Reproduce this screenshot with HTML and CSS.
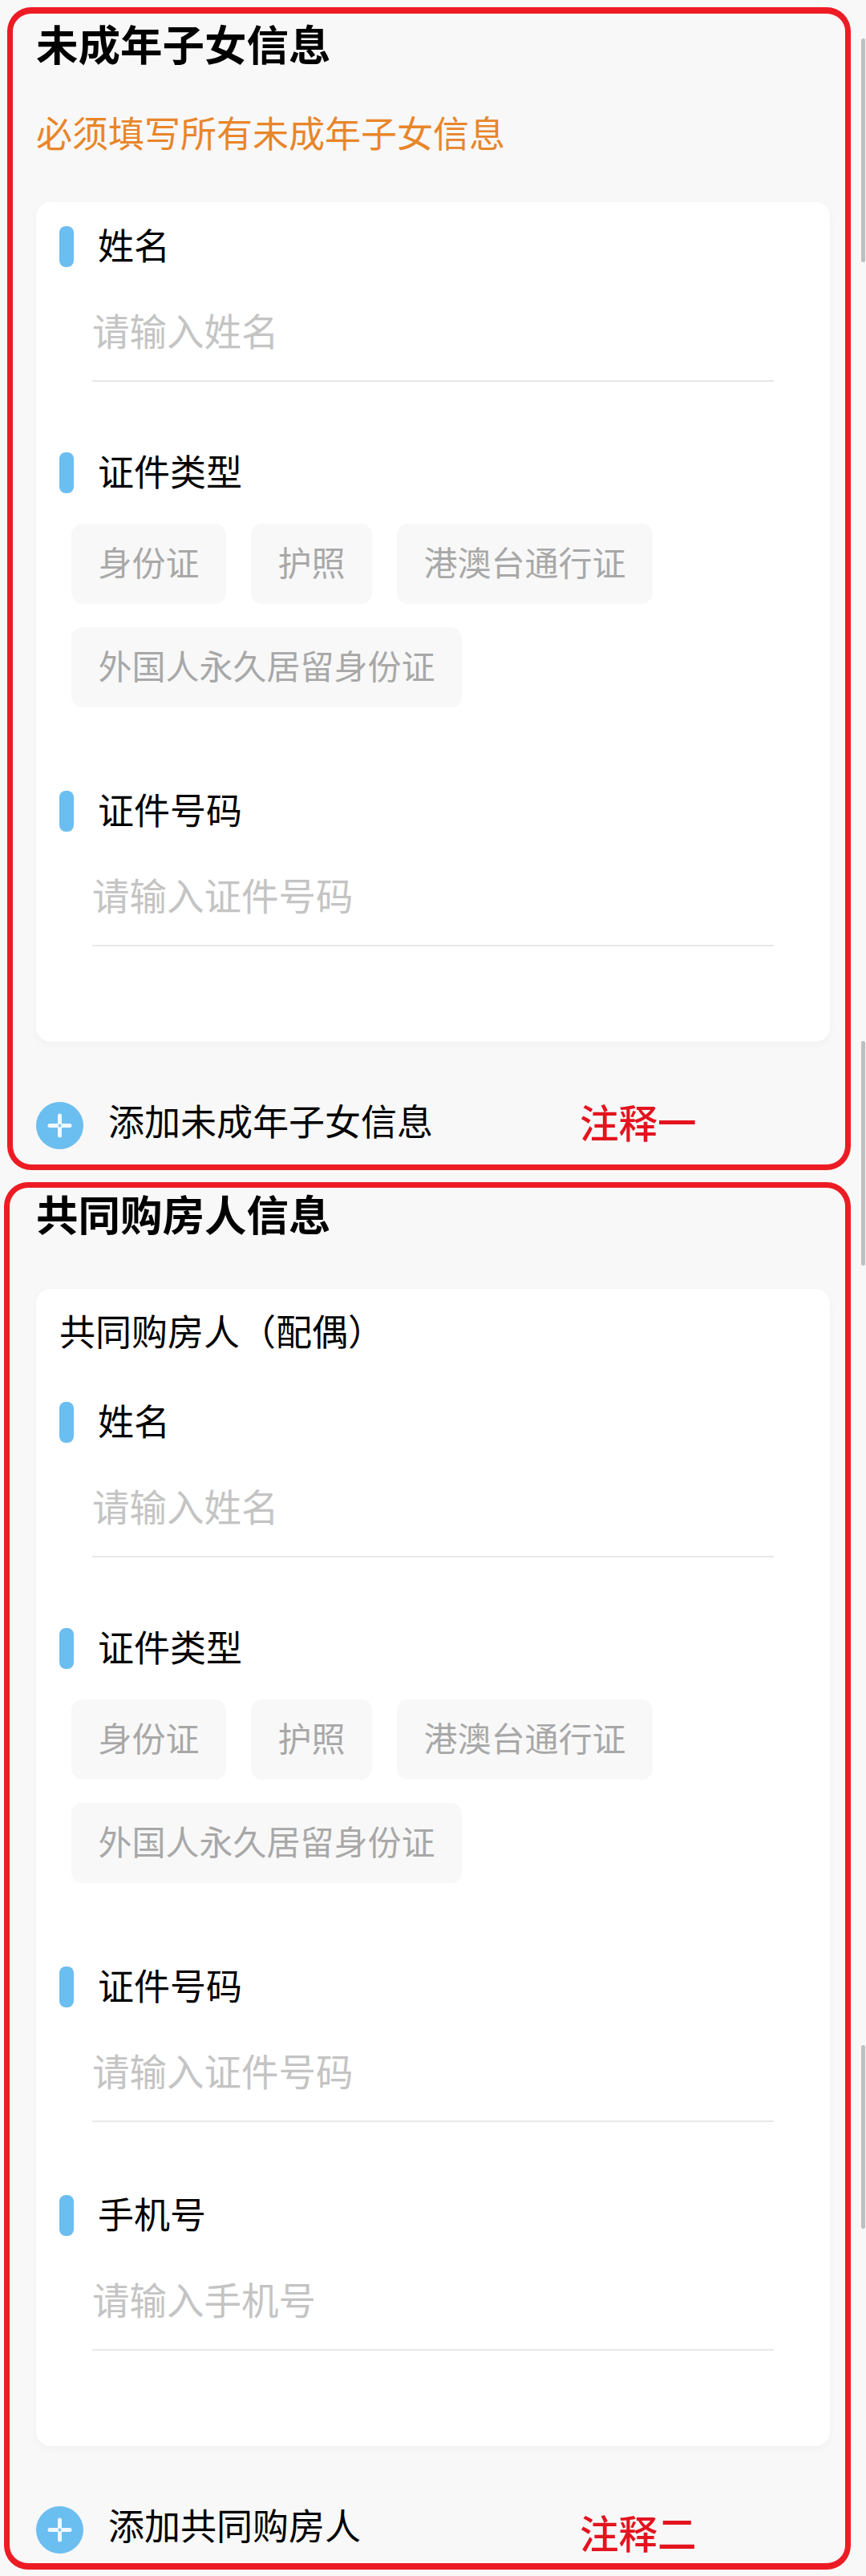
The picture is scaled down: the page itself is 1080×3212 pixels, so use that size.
FILE: index.html
```html
<!DOCTYPE html>
<html lang="zh-CN">
<head>
<meta charset="utf-8">
<title>信息填写</title>
<link rel="stylesheet" href="styles.css">
</head>
<body>
<main class="page">
  <section class="panel panel-children">
    <h2 class="panel-title">未成年子女信息</h2>
    <p class="panel-hint">必须填写所有未成年子女信息</p>
    <div class="card">
      <div class="field">
        <div class="field-label"><span class="field-bar"></span><span class="field-name">姓名</span></div>
        <div class="field-input">请输入姓名</div>
      </div>
      <div class="field">
        <div class="field-label"><span class="field-bar"></span><span class="field-name">证件类型</span></div>
        <div class="chips">
          <span class="chip">身份证</span><span class="chip">护照</span><span class="chip">港澳台通行证</span><span class="chip">外国人永久居留身份证</span>
        </div>
      </div>
      <div class="field field-after-chips">
        <div class="field-label"><span class="field-bar"></span><span class="field-name">证件号码</span></div>
        <div class="field-input">请输入证件号码</div>
      </div>
    </div>
    <div class="add-row">
      <svg class="add-icon" viewBox="0 0 59 59" aria-hidden="true"><circle cx="29.5" cy="29.5" r="29.5" fill="#6bbef0"/><rect x="14.5" y="27" width="30" height="5" rx="2.5" fill="#f0f9fe"/><rect x="27" y="14.5" width="5" height="30" rx="2.5" fill="#f0f9fe"/><rect x="27.75" y="27.75" width="3.5" height="3.5" fill="#86c8f1"/></svg>
      <span class="add-text">添加未成年子女信息</span>
      <span class="note">注释一</span>
    </div>
  </section>

  <section class="panel panel-buyers">
    <h2 class="panel-title">共同购房人信息</h2>
    <div class="card">
      <div class="card-heading">共同购房人（配偶）</div>
      <div class="field">
        <div class="field-label"><span class="field-bar"></span><span class="field-name">姓名</span></div>
        <div class="field-input">请输入姓名</div>
      </div>
      <div class="field">
        <div class="field-label"><span class="field-bar"></span><span class="field-name">证件类型</span></div>
        <div class="chips">
          <span class="chip">身份证</span><span class="chip">护照</span><span class="chip">港澳台通行证</span><span class="chip">外国人永久居留身份证</span>
        </div>
      </div>
      <div class="field field-after-chips">
        <div class="field-label"><span class="field-bar"></span><span class="field-name">证件号码</span></div>
        <div class="field-input">请输入证件号码</div>
      </div>
      <div class="field field-phone">
        <div class="field-label"><span class="field-bar"></span><span class="field-name">手机号</span></div>
        <div class="field-input">请输入手机号</div>
      </div>
    </div>
    <div class="add-row">
      <svg class="add-icon" viewBox="0 0 59 59" aria-hidden="true"><circle cx="29.5" cy="29.5" r="29.5" fill="#6bbef0"/><rect x="14.5" y="27" width="30" height="5" rx="2.5" fill="#f0f9fe"/><rect x="27" y="14.5" width="5" height="30" rx="2.5" fill="#f0f9fe"/><rect x="27.75" y="27.75" width="3.5" height="3.5" fill="#86c8f1"/></svg>
      <span class="add-text">添加共同购房人</span>
      <span class="note note-low">注释二</span>
    </div>
  </section>

  <span class="scroll-thumb thumb-a"></span>
  <span class="scroll-thumb thumb-b"></span>
  <span class="scroll-thumb thumb-c"></span>
</main>
</body>
</html>
```
FILE: styles.css
```css
* { box-sizing: border-box; }
html, body { margin: 0; padding: 0; background: #f8f8f8; }
body { font-family: "Noto Sans CJK SC", "Noto Sans", sans-serif; color: #000; }
.page { position: relative; width: 1080px; height: 3212px; overflow: hidden; padding-top: 9px; }

.panel { border: 7px solid #ed1c24; border-radius: 30px; background: #f8f8f8; }
.panel-children { margin-left: 9px; width: 1052px; height: 1450px; padding: 6px 19px 0 29px; border-top-width: 8px; }
.panel-buyers { margin: 15px 0 0 5px; width: 1056px; height: 1730px; padding: 1px 19px 0 33px; border-top-width: 7px; border-bottom-width: 8px; }

.panel-title { margin: 0; font-size: 52.5px; line-height: 60px; font-weight: 700; }
.panel-hint { margin: 52px 0 0; font-size: 45px; line-height: 60px; color: #e8862a; }

.card { background: #fff; border-radius: 18px; box-shadow: 0 3px 10px rgba(0, 0, 0, 0.035); padding: 30px 70px 119px 29px; width: 990px; }
.panel-children .card { margin-top: 57px; }
.panel-buyers .card { margin-top: 65px; padding-bottom: 119px; }

.card-heading { font-size: 45px; line-height: 50px; margin: -3px 0 64px 0; }

.field + .field { margin-top: 88px; }
.field-after-chips.field { margin-top: 104px; }
.field-phone.field { margin-top: 91px; }
.field-label { display: flex; align-items: center; gap: 30px; height: 51px; font-size: 45px; line-height: 51px; }
.field-name { padding-bottom: 6px; }
.field-bar { flex: none; width: 18px; height: 51px; border-radius: 8px; background: #6bbef0; }
.field-input { margin: 48px 0 0 41px; padding-bottom: 33px; border-bottom: 2px solid #e8e8e8; font-size: 46.5px; line-height: 60px; color: #c4c4c4; }

.chips { display: flex; flex-wrap: wrap; gap: 29px 31px; margin: 38px 0 0 15px; }
.chip { height: 100px; padding: 0 33.5px; border-radius: 14px; background: #f8f8f8; color: #a8a8a8; font-size: 42px; line-height: 94px; }

.add-row { display: flex; align-items: center; margin-top: 68px; }
.add-icon { flex: none; width: 59px; height: 59px; }
.add-text { margin-left: 31px; padding-bottom: 13px; font-size: 45px; line-height: 59px; }
.note { position: absolute; left: 723px; font-size: 48.5px; line-height: 60px; font-weight: 500; color: #e3141e; margin-top: -10px; }
.note-low { margin-top: 6px; }

.scroll-thumb { position: absolute; right: 1px; width: 5px; border-radius: 3px; background: #bfbfbf; }
.thumb-a { top: 48px; height: 279px; }
.thumb-b { top: 1298px; height: 280px; }
.thumb-c { top: 2550px; height: 229px; }
```
